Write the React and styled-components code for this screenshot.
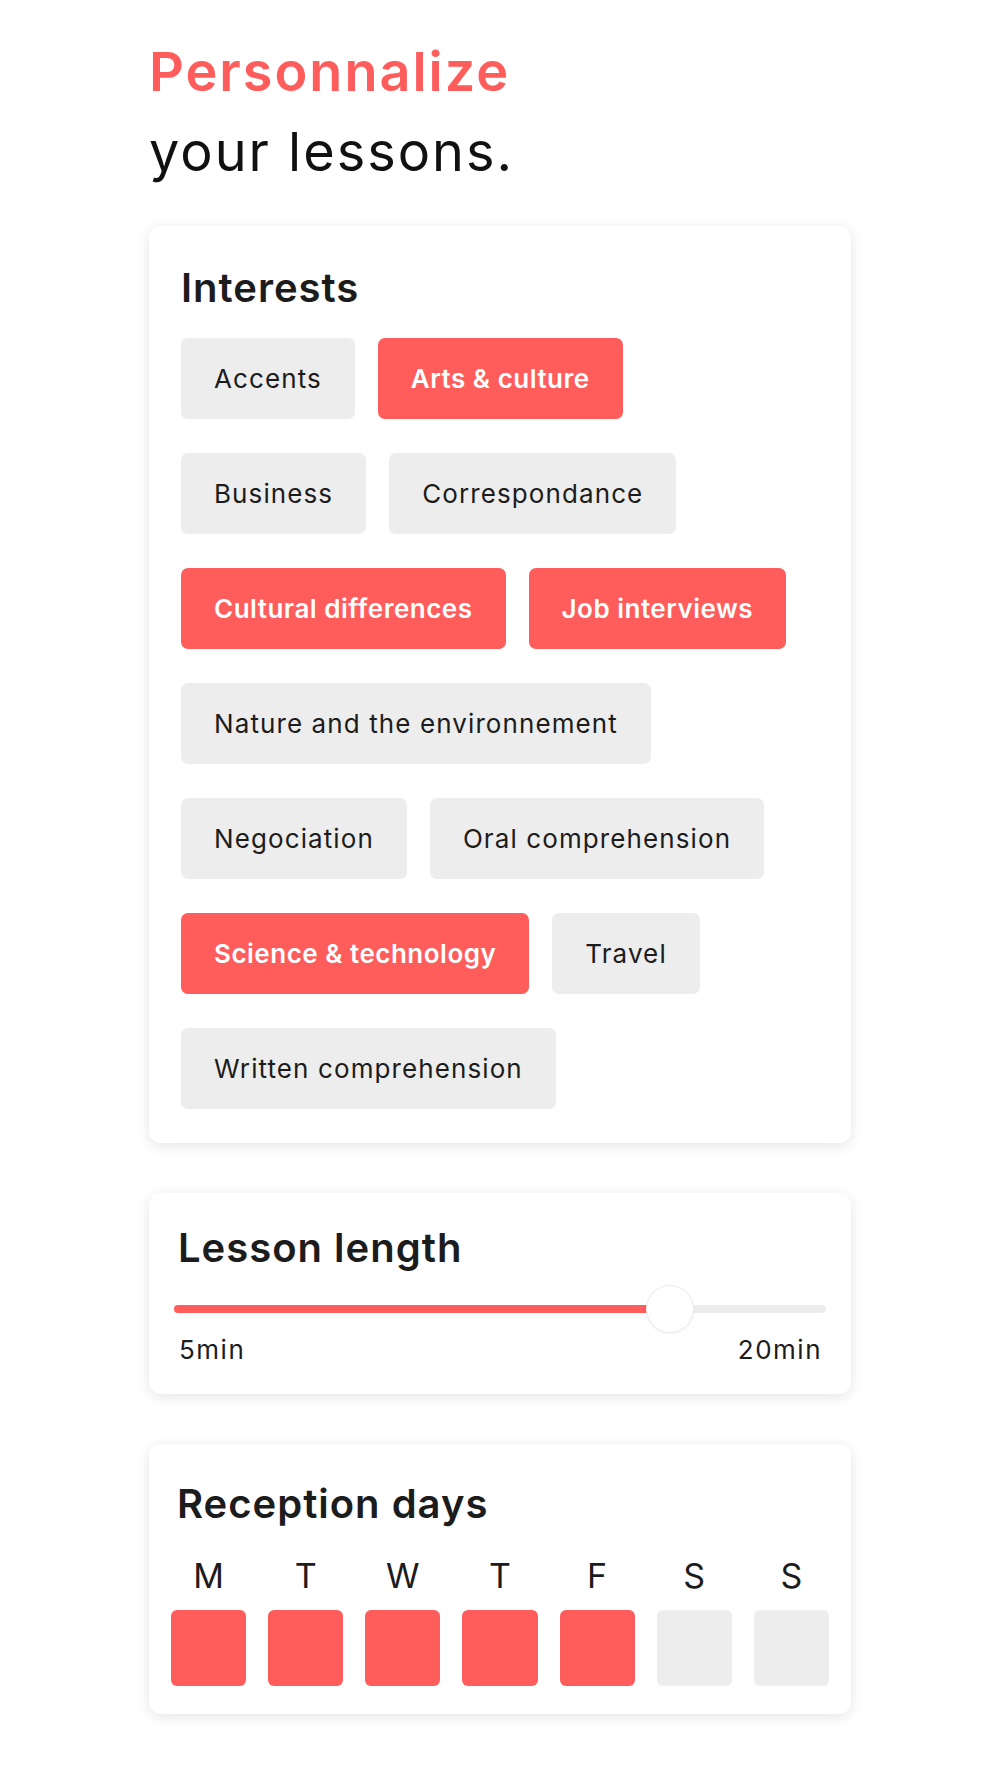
import React from 'react';
import styled, { createGlobalStyle } from 'styled-components';

const RED = '#FF5C5C';
const GREY = '#EDEDED';
const INK = '#1C1C1C';

const GlobalStyle = createGlobalStyle`
  body {
    margin: 0;
    background: #fff;
    font-family: Inter, "Liberation Sans", sans-serif;
    color: ${INK};
  }
`;

const Page = styled.main`
  width: 702px;
  margin: 0 auto;
  padding: 32px 0 60px;
  display: flex;
  flex-direction: column;
`;

const Heading = styled.h1`
  margin: 0 0 34px;
  font-size: 54px;
  line-height: 80px;
  font-weight: 400;
  color: #111;
  letter-spacing: 2px;

  span {
    display: block;
    color: ${RED};
    font-weight: 600;
  }
`;

const Card = styled.section`
  background: #fff;
  border-radius: 12px;
  box-shadow: 0 3px 14px rgba(0, 0, 0, 0.11);
  padding: ${(p) => p.$pad};
  margin-bottom: 50px;
`;

const CardTitle = styled.h2`
  margin: 0;
  padding-left: ${(p) => p.$indent || 0}px;
  font-size: 40px;
  line-height: 48px;
  font-weight: 600;
  letter-spacing: 1px;
  color: ${INK};
`;

/* interests */
const ChipList = styled.div`
  display: flex;
  flex-wrap: wrap;
  gap: 34px 23px;
  margin-top: 26px;
`;

const Chip = styled.button`
  height: 81px;
  padding: 0 33px;
  border: none;
  border-radius: 7px;
  font-family: inherit;
  font-size: 26px;
  font-weight: ${(p) => (p.$active ? 600 : 400)};
  letter-spacing: ${(p) => (p.$active ? 0.5 : 1.1)}px;
  color: ${(p) => (p.$active ? '#fff' : INK)};
  background: ${(p) => (p.$active ? RED : GREY)};
  cursor: pointer;
`;

/* lesson length */
const Slider = styled.div`
  position: relative;
  height: 48px;
  margin-top: 13px;
  display: flex;
  align-items: center;
`;

const Track = styled.div`
  position: relative;
  width: 100%;
  height: 8px;
  border-radius: 4px;
  background: ${GREY};
  overflow: hidden;
`;

const Fill = styled.div`
  height: 100%;
  background: ${RED};
`;

const Thumb = styled.div`
  position: absolute;
  top: 0;
  width: 48px;
  height: 48px;
  margin-left: -24px;
  border-radius: 50%;
  background: #fff;
  border: 1px solid #ececec;
  box-sizing: border-box;
  box-shadow: 0 1px 3px rgba(0, 0, 0, 0.05);
`;

const Range = styled.div`
  display: flex;
  justify-content: space-between;
  padding: 1px 4px 0 5px;
  font-size: 26px;
  line-height: 31px;
  letter-spacing: 1.5px;
`;

/* reception days */
const Days = styled.div`
  display: grid;
  grid-template-columns: repeat(7, 1fr);
  column-gap: 22px;
  margin-top: 27px;
`;

const Day = styled.div`
  display: flex;
  flex-direction: column;
  align-items: center;
  gap: 14px;
  font-size: 34px;
  line-height: 41px;
`;

const DayBox = styled.div`
  width: 100%;
  height: 76px;
  border-radius: 6px;
  background: ${(p) => (p.$on ? RED : GREY)};
`;

const interests = [
  ['Accents', false],
  ['Arts & culture', true],
  ['Business', false],
  ['Correspondance', false],
  ['Cultural differences', true],
  ['Job interviews', true],
  ['Nature and the environnement', false],
  ['Negociation', false],
  ['Oral comprehension', false],
  ['Science & technology', true],
  ['Travel', false],
  ['Written comprehension', false],
];

const days = [
  ['M', true],
  ['T', true],
  ['W', true],
  ['T', true],
  ['F', true],
  ['S', false],
  ['S', false],
];

export default function App() {
  const value = 0.76;

  return (
    <>
      <GlobalStyle />
      <Page>
        <Heading>
          <span>Personnalize</span>
          your lessons.
        </Heading>

        <Card $pad="38px 48px 34px 32px">
          <CardTitle>Interests</CardTitle>
          <ChipList>
            {interests.map(([label, active]) => (
              <Chip key={label} $active={active}>
                {label}
              </Chip>
            ))}
          </ChipList>
        </Card>

        <Card $pad="31px 25px 29px">
          <CardTitle $indent={4}>Lesson length</CardTitle>
          <Slider>
            <Track>
              <Fill style={{ width: `${value * 100}%` }} />
            </Track>
            <Thumb style={{ left: `${value * 100}%` }} />
          </Slider>
          <Range>
            <span>5min</span>
            <span>20min</span>
          </Range>
        </Card>

        <Card $pad="36px 22px 28px">
          <CardTitle $indent={6}>Reception days</CardTitle>
          <Days>
            {days.map(([d, on], i) => (
              <Day key={i}>
                {d}
                <DayBox $on={on} />
              </Day>
            ))}
          </Days>
        </Card>
      </Page>
    </>
  );
}
